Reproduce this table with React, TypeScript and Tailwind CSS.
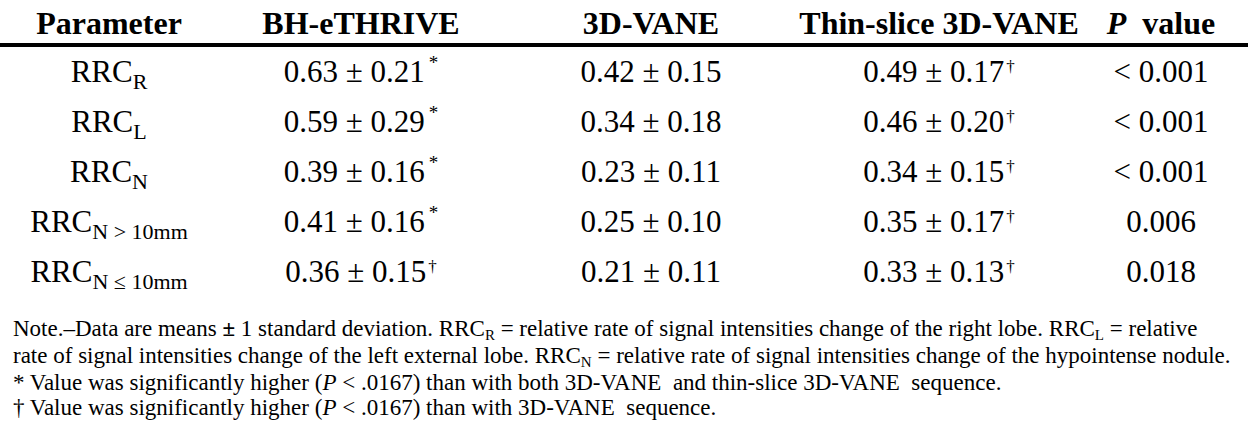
const rows = [
  { label: "R", a: "0.63 ± 0.21", am: "*", b: "0.42 ± 0.15", c: "0.49 ± 0.17", cm: "†", p: "< 0.001" },
  { label: "L", a: "0.59 ± 0.29", am: "*", b: "0.34 ± 0.18", c: "0.46 ± 0.20", cm: "†", p: "< 0.001" },
  { label: "N", a: "0.39 ± 0.16", am: "*", b: "0.23 ± 0.11", c: "0.34 ± 0.15", cm: "†", p: "< 0.001" },
  { label: "N > 10mm", a: "0.41 ± 0.16", am: "*", b: "0.25 ± 0.10", c: "0.35 ± 0.17", cm: "†", p: "0.006" },
  { label: "N ≤ 10mm", a: "0.36 ± 0.15", am: "†", b: "0.21 ± 0.11", c: "0.33 ± 0.13", cm: "†", p: "0.018" },
];

const cols = "grid grid-cols-[218px_286px_294px_282px_162px]";

const Mark = ({ m }: { m: string }) =>
  m === "*" ? (
    <span className="text-[19px] leading-none align-[13px] ml-[4px]">*</span>
  ) : (
    <span className="text-[17px] leading-none align-[10px] ml-[2px]">†</span>
  );

const Sub = ({ children }: { children: React.ReactNode }) => (
  <span className="text-[15px] leading-none align-[-4px]">{children}</span>
);

export default function App() {
  return (
    <div className="w-[1248px] h-[435px] bg-white text-black [font-family:'Liberation_Serif',serif] overflow-hidden">
      {/* header */}
      <div className={`${cols} pt-[7px] pb-[4px] text-[32px] leading-[32px] font-bold text-center`}>
        <div>Parameter</div>
        <div>BH-eTHRIVE</div>
        <div>3D-VANE</div>
        <div className="whitespace-nowrap">Thin-slice 3D-VANE</div>
        <div className="whitespace-pre">
          <i>P</i>  value
        </div>
      </div>
      <div className="h-[4px] bg-black" />

      {/* body */}
      <div className="text-[31px] leading-[50px] text-center">
        {rows.map((r) => (
          <div key={r.label} className={`${cols} h-[50px] whitespace-nowrap`}>
            <div>
              RRC<span className="text-[22px] leading-none align-[-7px]">{r.label}</span>
            </div>
            <div>
              {r.a}
              <Mark m={r.am} />
            </div>
            <div>{r.b}</div>
            <div>
              {r.c}
              <Mark m={r.cm} />
            </div>
            <div>{r.p}</div>
          </div>
        ))}
      </div>

      {/* notes */}
      <div className="mt-[19px] px-[13px] text-[23px] leading-[25px] whitespace-pre">
        <div>
          Note.–Data are means <span className="font-bold">±</span> 1 standard deviation. RRC<Sub>R</Sub> = relative rate of signal intensities change of the right lobe. RRC<Sub>L</Sub> = relative
        </div>
        <div>
          rate of signal intensities change of the left external lobe. RRC<Sub>N</Sub> = relative rate of signal intensities change of the hypointense nodule.
        </div>
        <div>
          * Value was significantly higher (<i>P</i> {"< .0167) than with both 3D-VANE  and thin-slice 3D-VANE  sequence."}
        </div>
        <div>
          † Value was significantly higher (<i>P</i> {"< .0167) than with 3D-VANE  sequence."}
        </div>
      </div>
    </div>
  );
}
